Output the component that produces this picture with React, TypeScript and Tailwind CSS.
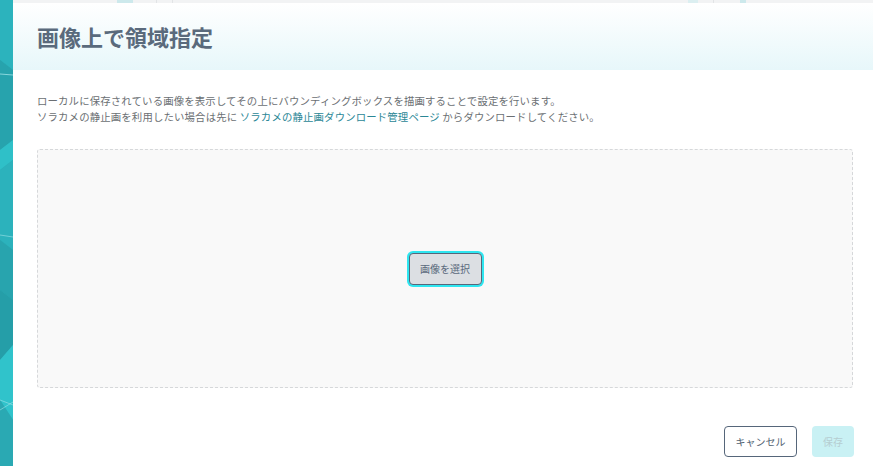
const FONT = "font-['Noto_Sans_CJK_JP','Noto_Sans',sans-serif]";

function Backdrop() {
  // teal geometric strip peeking out from behind the modal
  return (
    <svg width="13" height="466" viewBox="0 0 13 466" className="block shrink-0">
      <rect width="13" height="466" fill="#2aaeb8" />
      <polygon points="0,0 13,0 13,70 0,60" fill="#2cb3bd" />
      <polygon points="0,60 13,70 13,140 0,150" fill="#27a3ad" />
      <polygon points="0,150 13,140 13,160 0,170" fill="#2fc0c8" />
      <polygon points="0,170 13,160 13,250 0,240" fill="#2cb2bc" />
      <polygon points="0,240 13,250 13,300 0,290" fill="#28a4ae" />
      <polygon points="0,290 13,300 13,345 0,360" fill="#259ea8" />
      <polygon points="0,360 13,345 13,420 0,400" fill="#30c3cb" />
      <polygon points="0,400 13,420 13,466 0,466" fill="#2aa9b3" />
      <line x1="0" y1="74" x2="13" y2="75" stroke="#9fe3e8" strokeWidth="0.8" />
      <line x1="0" y1="235" x2="13" y2="237" stroke="#9fe3e8" strokeWidth="0.6" />
      <line x1="0" y1="400" x2="13" y2="405" stroke="#9fe3e8" strokeWidth="0.6" />
      <line x1="0" y1="410" x2="13" y2="402" stroke="#9fe3e8" strokeWidth="0.6" />
    </svg>
  );
}

export default function App() {
  return (
    <div className={`h-[466px] w-full overflow-hidden bg-[#f2f3f4] ${FONT} flex`}>
      <Backdrop />

      <div className="flex flex-col shrink-0">
        {/* strip of the page behind */}
        <div className="h-[3px] flex">
          <div className="w-[104px]" />
          <div className="w-[16px] bg-[#cde9ec]" />
          <div className="w-[24px] border-r border-[#e2e4e6]" />
          <div className="w-[16px] border-r border-[#e2e4e6]" />
          <div className="w-[515px]" />
          <div className="w-[10px] bg-[#dceff1]" />
          <div className="w-[16px] border-r border-[#e2e4e6]" />
          <div className="w-[26px]" />
          <div className="w-[6px] bg-[#cde9ec]" />
        </div>

        {/* modal */}
        <div className="w-[863px] flex-1 bg-white flex flex-col">
          <div className="h-[67px] px-6 flex items-center bg-gradient-to-b from-white to-[#e7f7fa]">
            <h1 className="text-[22px] font-bold text-[#5a6a7c] leading-none -mt-[1px]">
              画像上で領域指定
            </h1>
          </div>

          <div className="px-6 pt-[23px]">
            <p className="text-[10.4px] leading-[16px] tracking-[0.15px] text-[#6b6f73]">
              ローカルに保存されている画像を表示してその上にバウンディングボックスを描画することで設定を行います。
              <br />
              ソラカメの静止画を利用したい場合は先に{" "}
              <a className="text-[#2b8796]">ソラカメの静止画ダウンロード管理ページ</a>{" "}
              からダウンロードしてください。
            </p>

            <div className="mt-[24px] w-[816px] h-[239px] rounded-[3px] border border-dashed border-[#d6d8da] bg-[#f9f9f9] flex items-center justify-center">
              <button className="w-[73px] h-[32px] rounded-[4px] bg-[#dcdfe3] border border-[#56667a] ring-2 ring-[#2ee6f0] text-[10px] text-[#5a6a7c]">
                画像を選択
              </button>
            </div>

            <div className="mt-[38px] w-[816px] flex justify-end gap-[15px]">
              <button className="w-[73px] h-[31px] rounded-[4px] border border-[#56667a] bg-white text-[10px] text-[#4f5e70]">
                キャンセル
              </button>
              <button className="w-[42px] h-[31px] rounded-[4px] bg-[#c9f1f4] text-[10px] text-[#b6cdd1] mr-[-1px]">
                保存
              </button>
            </div>
          </div>
        </div>
      </div>
    </div>
  );
}
